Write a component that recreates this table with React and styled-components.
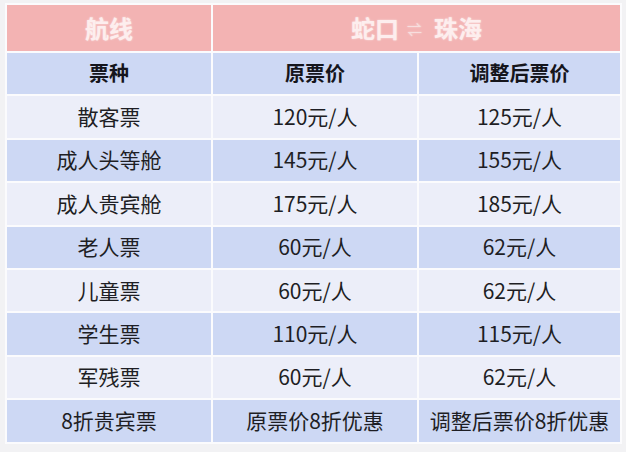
import React from "react";
import styled, { createGlobalStyle } from "styled-components";

const GlobalStyle = createGlobalStyle`
  html, body {
    margin: 0;
    padding: 0;
    background: #f2f2f4;
  }
  body {
    font-family: "Microsoft YaHei", "Noto Sans CJK SC", "Noto Sans", sans-serif;
  }
`;

const Page = styled.div`
  width: 626px;
  height: 452px;
  padding: 3px 4px 0 5px;
  box-sizing: border-box;
`;

const Table = styled.div`
  display: grid;
  grid-template-columns: 204px 204px 201px;
  grid-template-rows: 46px repeat(9, 41.4px);
  gap: 2px;
  padding: 2px;
  background: #fbfbfd;
  width: fit-content;
`;

const Cell = styled.div`
  display: flex;
  align-items: center;
  justify-content: center;
  background: ${(p) => (p.$tone === "blue" ? "#cdd8f4" : "#eceef9")};
  color: #1e1e24;
  font-size: 21px;
  line-height: 1;
  padding-bottom: 1px;
  grid-column: ${(p) => p.$span || "auto"};
`;

const HeadCell = styled(Cell)`
  background: #f3b3b3;
  color: #fdeeee;
  font-size: 24px;
  font-weight: 700;
  text-shadow: 0 0 2px rgba(255, 255, 255, 0.6);
  padding-bottom: 0;
`;

const ColTitle = styled(Cell)`
  font-weight: 700;
  font-size: 20px;
  color: #15151c;
`;

const Arrow = styled.span`
  font-size: 15px;
  font-weight: 400;
  color: #f7dede;
  margin: 0 12px 0 8px;
`;

const rows = [
  ["散客票", "120元/人", "125元/人"],
  ["成人头等舱", "145元/人", "155元/人"],
  ["成人贵宾舱", "175元/人", "185元/人"],
  ["老人票", "60元/人", "62元/人"],
  ["儿童票", "60元/人", "62元/人"],
  ["学生票", "110元/人", "115元/人"],
  ["军残票", "60元/人", "62元/人"],
  ["8折贵宾票", "原票价8折优惠", "调整后票价8折优惠"],
];

export default function App() {
  return (
    <Page>
      <GlobalStyle />
      <Table>
        <HeadCell>航线</HeadCell>
        <HeadCell $span="span 2">
          蛇口<Arrow>⇌</Arrow>珠海
        </HeadCell>
        <ColTitle $tone="blue">票种</ColTitle>
        <ColTitle $tone="blue">原票价</ColTitle>
        <ColTitle $tone="blue">调整后票价</ColTitle>
        {rows.map((row, i) =>
          row.map((text, j) => (
            <Cell key={`${i}-${j}`} $tone={i % 2 === 1 ? "blue" : "light"}>
              {text}
            </Cell>
          ))
        )}
      </Table>
    </Page>
  );
}
